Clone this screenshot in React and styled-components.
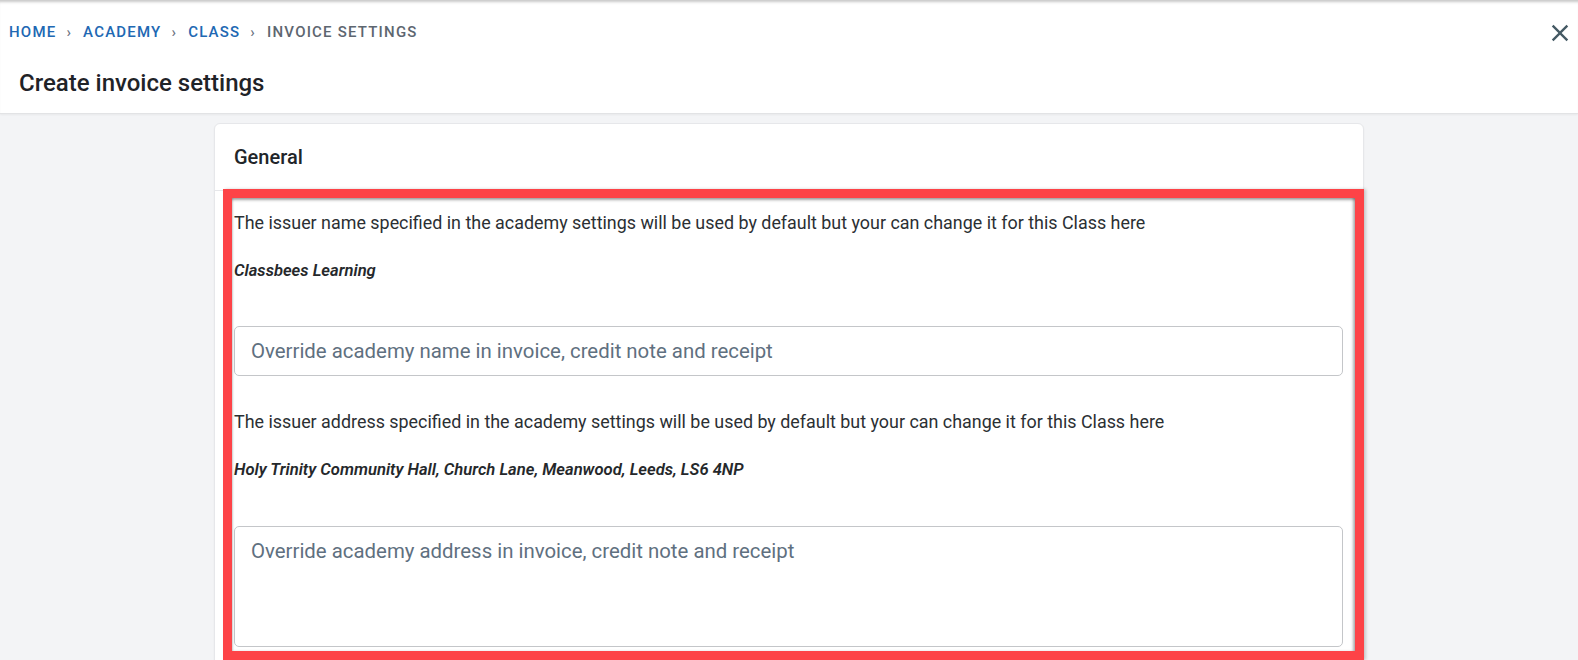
import React from "react";
import styled, { createGlobalStyle } from "styled-components";

const Global = createGlobalStyle`
  html, body { margin: 0; padding: 0; }
  body {
    background: #f3f4f6;
    font-family: Roboto, "Noto Sans", "Liberation Sans", sans-serif;
    color: #212529;
  }
  * { box-sizing: border-box; }
`;

const Page = styled.div`
  min-height: 660px;
  background: #f3f4f6;
`;

const Header = styled.header`
  background: #fff;
  height: 114px;
  padding: 19px 4px 0 0;
  border-bottom: 1px solid #e2e3e5;
  box-shadow: inset 0 4px 3px -2px rgba(0, 0, 0, 0.22), 0 1px 2px rgba(0, 0, 0, 0.05);
`;

const TopRow = styled.div`
  display: flex;
  align-items: center;
  justify-content: space-between;
  height: 28px;
`;

const Crumbs = styled.nav`
  display: flex;
  align-items: center;
  margin: 0 0 3px 9px;
  font-size: 15px;
  font-weight: 500;
  letter-spacing: 1.2px;
  line-height: 20px;
`;

const Crumb = styled.span`
  color: ${(p) => (p.$current ? "#5d6670" : "#2168b3")};
  text-transform: uppercase;
`;

const Sep = styled.span`
  color: #6b7280;
  margin: 0 11px 0 10px;
  font-size: 15px;
`;

const CloseBtn = styled.button`
  width: 28px;
  height: 28px;
  padding: 0;
  border: 0;
  background: transparent;
  color: #455a64;
  display: flex;
  align-items: center;
  justify-content: center;
  cursor: pointer;
`;

const Title = styled.h1`
  margin: 21px 0 0 19px;
  font-size: 24px;
  font-weight: 500;
  line-height: 30px;
  color: #1f2328;
`;

const Main = styled.main`
  padding-top: 9px;
`;

const Card = styled.section`
  position: relative;
  width: 1150px;
  margin: 0 auto;
  background: #fff;
  border: 1px solid #e6e7ea;
  border-radius: 6px;
  box-shadow: 0 1px 2px rgba(0, 0, 0, 0.05);
`;

const CardHeader = styled.div`
  padding: 20px 19px;
  font-size: 20px;
  font-weight: 500;
  line-height: 26px;
  color: #212529;
  border-bottom: 1px solid #e6e7ea;
`;

const CardBody = styled.div`
  padding: 20px 19px 40px;
  display: flex;
  flex-direction: column;
`;

const Help = styled.p`
  margin: ${(p) => p.$mt || 0}px 0 0;
  font-size: 17.9px;
  line-height: 24px;
  color: #2b2f33;
`;

const Value = styled.p`
  margin: 26px 0 0;
  font-size: 16.6px;
  font-weight: 600;
  font-style: italic;
  line-height: 20px;
  color: #25282b;
`;

const fieldStyles = `
  width: 1109px;
  border: 1px solid #c4c6c9;
  border-radius: 5px;
  background: #fff;
  font-family: Roboto, "Noto Sans", "Liberation Sans", sans-serif;
  font-size: 20.4px;
  color: #212529;
  outline: none;
  &::placeholder { color: #5f7080; opacity: 1; }
`;

const TextInput = styled.input`
  ${fieldStyles}
  margin-top: 45px;
  height: 50px;
  padding: 0 16px;
`;

const TextArea = styled.textarea`
  ${fieldStyles}
  margin-top: 46px;
  height: 121px;
  padding: 10px 16px;
  line-height: 28px;
  resize: none;
`;

const Highlight = styled.div`
  position: absolute;
  left: 8px;
  right: -1px;
  top: 65px;
  height: 471px;
  border: 9px solid #fd4347;
  pointer-events: none;
  box-shadow: inset 0 3px 3px -1px rgba(0, 0, 0, 0.35),
    inset -3px 0 3px -1px rgba(0, 0, 0, 0.3),
    inset 2px 0 2px -1px rgba(0, 0, 0, 0.15),
    2px 0 3px rgba(0, 0, 0, 0.18);
`;

function CloseIcon() {
  return (
    <svg width="28" height="28" viewBox="0 0 24 24" fill="currentColor" aria-hidden="true">
      <path d="M19 6.41 17.59 5 12 10.59 6.41 5 5 6.41 10.59 12 5 17.59 6.41 19 12 13.41 17.59 19 19 17.59 13.41 12z" />
    </svg>
  );
}

const crumbs = ["Home", "Academy", "Class", "Invoice settings"];

export default function App() {
  return (
    <Page>
      <Global />
      <Header>
        <TopRow>
          <Crumbs>
            {crumbs.map((c, i) => (
              <React.Fragment key={c}>
                {i > 0 && <Sep>›</Sep>}
                <Crumb $current={i === crumbs.length - 1}>{c}</Crumb>
              </React.Fragment>
            ))}
          </Crumbs>
          <CloseBtn aria-label="Close">
            <CloseIcon />
          </CloseBtn>
        </TopRow>
        <Title>Create invoice settings</Title>
      </Header>
      <Main>
        <Card>
          <CardHeader>General</CardHeader>
          <CardBody>
            <Help>
              The issuer name specified in the academy settings will be used by default but your can change it for this Class here
            </Help>
            <Value>Classbees Learning</Value>
            <TextInput placeholder="Override academy name in invoice, credit note and receipt" />
            <Help $mt={34}>
              The issuer address specified in the academy settings will be used by default but your can change it for this Class here
            </Help>
            <Value>Holy Trinity Community Hall, Church Lane, Meanwood, Leeds, LS6 4NP</Value>
            <TextArea placeholder="Override academy address in invoice, credit note and receipt" />
          </CardBody>
          <Highlight />
        </Card>
      </Main>
    </Page>
  );
}
